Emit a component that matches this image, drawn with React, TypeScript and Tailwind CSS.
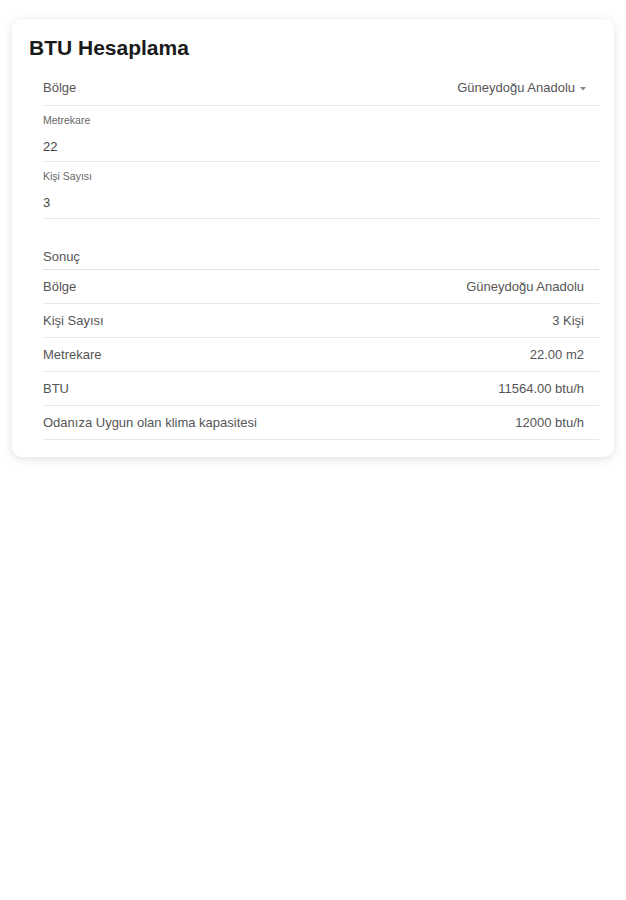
import React from 'react';

const results = [
  { label: 'Bölge', value: 'Güneydoğu Anadolu' },
  { label: 'Kişi Sayısı', value: '3 Kişi' },
  { label: 'Metrekare', value: '22.00 m2' },
  { label: 'BTU', value: '11564.00 btu/h' },
  { label: 'Odanıza Uygun olan klima kapasitesi', value: '12000 btu/h' },
];

export default function App() {
  return (
    <div className="min-h-[900px] bg-white font-['Liberation_Sans',Arial,sans-serif] pt-[19px]">
      <div className="mx-[12px] rounded-[10px] bg-white pl-[17px] pr-[15px] pt-[17px] pb-[17px] shadow-[0_2px_10px_rgba(0,0,0,0.12)]">
        <h1 className="text-[21px] font-bold leading-[24px] text-[#1a1a1a]">BTU Hesaplama</h1>

        <div className="ml-[14px] mt-[11px]">
          {/* Bölge select */}
          <div className="flex h-[35px] items-center justify-between border-b border-[#e8e8e8] pr-[13px] text-[13px] text-[#555]">
            <span>Bölge</span>
            <span className="flex items-center gap-[5px]">
              Güneydoğu Anadolu
              <svg width="6" height="4" viewBox="0 0 6 4" className="mt-[1px]">
                <path d="M0 0 L6 0 L3 3.5 Z" fill="#888" />
              </svg>
            </span>
          </div>

          {/* Metrekare input */}
          <div className="flex h-[56px] flex-col border-b border-[#e8e8e8] text-[#444]">
            <span className="mt-[9px] text-[10.5px] leading-[11px] text-[#666]">Metrekare</span>
            <span className="mt-[14px] text-[13px] leading-[14px]">22</span>
          </div>

          {/* Kişi sayısı input */}
          <div className="flex h-[57px] flex-col border-b border-[#e8e8e8] text-[#444]">
            <span className="mt-[9px] text-[10.5px] leading-[11px] text-[#666]">Kişi Sayısı</span>
            <span className="mt-[14px] text-[13px] leading-[14px]">3</span>
          </div>

          {/* Sonuç */}
          <div className="mt-[27px] flex h-[24px] items-center border-b border-[#e0e0e0] pb-[2px] text-[13px] text-[#555]">
            Sonuç
          </div>

          {results.map((r) => (
            <div
              key={r.label}
              className="flex h-[34px] items-center justify-between border-b border-[#e8e8e8] pr-[15px] text-[13px] text-[#555]"
            >
              <span>{r.label}</span>
              <span>{r.value}</span>
            </div>
          ))}
        </div>
      </div>
    </div>
  );
}
